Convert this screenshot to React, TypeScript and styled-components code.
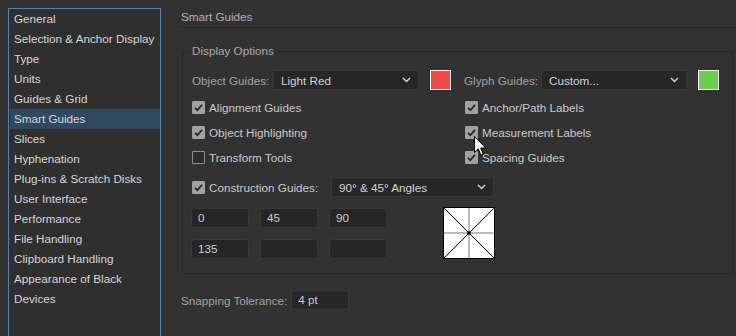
import React from 'react';
import styled, { createGlobalStyle } from 'styled-components';

const GlobalStyle = createGlobalStyle`
  * {
    box-sizing: border-box;
  }

  body {
    margin: 0;
    background: #323232;
    font-family: "Liberation Sans", Arial, sans-serif;
    font-size: 11.7px;
    overflow: hidden;
  }
`;

const Page = styled.div`
  position: relative;
  display: flex;
  align-items: flex-start;
  width: 736px;
  height: 336px;
  overflow: hidden;
`;

const Sidebar = styled.ul`
  list-style: none;
  margin: 8px 0 0 8px;
  padding: 0 0 0 1px;
  width: 153px;
  height: 340px;
  flex-shrink: 0;
  background: #2f2f2f;
  border: 1px solid #5683ae;
`;

const NavItem = styled.li<{ $active?: boolean }>`
  height: 20px;
  line-height: 20px;
  padding-left: 4px;
  color: #d6d6d6;
  white-space: nowrap;
  background: ${(p) => (p.$active ? '#2f4961' : 'transparent')};
`;

const Main = styled.div`
  flex: 1;
  margin-left: 19px;
`;

const Header = styled.div`
  padding: 9px 0 2px 1px;
  line-height: 16px;
  color: #b2b2b2;
  border-bottom: 1px solid #262626;
  box-shadow: 0 1px 0 #363636;
`;

const Group = styled.fieldset`
  margin: 15px 3px 0 2px;
  padding: 11px 9px 14px 9px;
  min-width: 0;
  border: 1px solid #282828;
  border-radius: 2px;
`;

const Legend = styled.legend`
  padding: 0 3px;
  margin-left: -3px;
  line-height: 16px;
  color: #a9a9a9;
`;

const TopRow = styled.div`
  display: grid;
  grid-template-columns: 272px 1fr;
`;

const Field = styled.div`
  display: flex;
  align-items: center;
  height: 20px;
`;

const FieldLabel = styled.span<{ $width?: number }>`
  width: ${(p) => (p.$width ? `${p.$width}px` : 'auto')};
  color: #a2a2a2;
  white-space: nowrap;
`;

const Select = styled.div<{ $width: number }>`
  display: flex;
  align-items: center;
  justify-content: space-between;
  width: ${(p) => p.$width}px;
  height: 20px;
  padding: 0 7px 0 7px;
  background: #272727;
  border: 1px solid #393939;
  border-radius: 3px;
  color: #d2d2d2;
  white-space: nowrap;

  svg {
    flex-shrink: 0;
  }
`;

const Swatch = styled.div<{ $color: string }>`
  width: 21px;
  height: 20px;
  margin-left: 11px;
  background: ${(p) => p.$color};
  border: 1px solid #f2f2f2;
`;

const CheckGrid = styled.div`
  display: grid;
  grid-template-columns: 273px 1fr;
  grid-auto-rows: 25px;
  align-items: center;
  margin-top: 5px;
`;

const CheckRow = styled.label<{ $width?: number }>`
  display: flex;
  align-items: center;
  gap: 4px;
  width: ${(p) => (p.$width ? `${p.$width}px` : 'auto')};
  color: #c9c9c9;
  white-space: nowrap;
`;

const Box = styled.span<{ $checked: boolean }>`
  display: flex;
  align-items: center;
  justify-content: center;
  width: 13px;
  height: 13px;
  border-radius: 1px;
  background: ${(p) => (p.$checked ? '#a1a1a1' : '#2c2c2c')};
  border: 1px solid ${(p) => (p.$checked ? '#a1a1a1' : '#8e8e8e')};
`;

const ConstructionRow = styled.div`
  display: flex;
  align-items: center;
  margin-top: 7px;
`;

const AngleArea = styled.div`
  display: flex;
  align-items: flex-start;
  margin-top: 10px;
  gap: 56px;
`;

const AngleGrid = styled.div`
  display: grid;
  grid-template-columns: repeat(3, 58px);
  grid-auto-rows: 20px;
  gap: 11px;
  margin-left: -1px;
  margin-top: 1px;
`;

const NumBox = styled.div<{ $width?: number }>`
  width: ${(p) => (p.$width ? `${p.$width}px` : 'auto')};
  height: 20px;
  line-height: 18px;
  padding-left: 6px;
  background: #262626;
  border: 1px solid #393939;
  border-radius: 3px;
  color: #cdcdcd;
`;

const SnapRow = styled.div`
  display: flex;
  align-items: center;
  gap: 4px;
  margin-top: 16px;
  padding-left: 1px;
`;

const Cursor = styled.svg`
  position: absolute;
  left: 474px;
  top: 136px;
`;

const Chevron = () => (
  <svg width="9" height="6" viewBox="0 0 9 6">
    <path d="M1 1 L4.5 4.5 L8 1" fill="none" stroke="#cfcfcf" strokeWidth="1.5" />
  </svg>
);

const Check = ({ checked }: { checked: boolean }) => (
  <Box $checked={checked}>
    {checked && (
      <svg width="11" height="11" viewBox="0 0 11 11">
        <path d="M2 5.8 L4.4 8.2 L9 2.8" fill="none" stroke="#2a2a2a" strokeWidth="1.8" />
      </svg>
    )}
  </Box>
);

const AngleDiagram = () => (
  <svg width="52" height="52" viewBox="0 0 52 52">
    <rect x="0.5" y="0.5" width="51" height="51" fill="#fff" stroke="#000" />
    <line x1="26" y1="1" x2="26" y2="51" stroke="#b9b9b9" strokeWidth="2" />
    <line x1="1" y1="26" x2="51" y2="26" stroke="#b9b9b9" strokeWidth="2" />
    <line x1="1" y1="1" x2="51" y2="51" stroke="#000" strokeWidth="1" />
    <line x1="51" y1="1" x2="1" y2="51" stroke="#000" strokeWidth="1" />
    <circle cx="26" cy="26" r="1.8" fill="#000" />
  </svg>
);

const navItems = [
  'General',
  'Selection & Anchor Display',
  'Type',
  'Units',
  'Guides & Grid',
  'Smart Guides',
  'Slices',
  'Hyphenation',
  'Plug-ins & Scratch Disks',
  'User Interface',
  'Performance',
  'File Handling',
  'Clipboard Handling',
  'Appearance of Black',
  'Devices',
];

const checks: Array<[string, boolean]> = [
  ['Alignment Guides', true],
  ['Anchor/Path Labels', true],
  ['Object Highlighting', true],
  ['Measurement Labels', true],
  ['Transform Tools', false],
  ['Spacing Guides', true],
];

const angles = ['0', '45', '90', '135', '', ''];

const App = () => {
  return (
    <Page>
      <GlobalStyle />

      <Sidebar>
        {navItems.map((item) => (
          <NavItem key={item} $active={item === 'Smart Guides'}>{item}</NavItem>
        ))}
      </Sidebar>

      <Main>
        <Header>Smart Guides</Header>

        <Group>
          <Legend>Display Options</Legend>

          <TopRow>
            <Field>
              <FieldLabel $width={81}>Object Guides:</FieldLabel>
              <Select $width={146}>Light Red<Chevron /></Select>
              <Swatch $color="#f34848" />
            </Field>
            <Field>
              <FieldLabel $width={77}>Glyph Guides:</FieldLabel>
              <Select $width={146}>Custom...<Chevron /></Select>
              <Swatch $color="#6dcd4f" />
            </Field>
          </TopRow>

          <CheckGrid>
            {checks.map(([label, checked]) => (
              <CheckRow key={label}>
                <Check checked={checked} />
                {label}
              </CheckRow>
            ))}
          </CheckGrid>

          <ConstructionRow>
            <CheckRow $width={139}>
              <Check checked />
              Construction Guides:
            </CheckRow>
            <Select $width={163}>90° &amp; 45° Angles<Chevron /></Select>
          </ConstructionRow>

          <AngleArea>
            <AngleGrid>
              {angles.map((a, i) => (
                <NumBox key={i}>{a}</NumBox>
              ))}
            </AngleGrid>
            <AngleDiagram />
          </AngleArea>
        </Group>

        <SnapRow>
          <FieldLabel>Snapping Tolerance:</FieldLabel>
          <NumBox $width={58}>4 pt</NumBox>
        </SnapRow>
      </Main>

      <Cursor width="13" height="21" viewBox="0 0 13 21">
        <path d="M0.5 0.5 L0.5 16.5 L4.3 12.8 L7 19.3 L9.3 18.3 L6.7 12 L11.8 12 Z" fill="#fff" stroke="#000" strokeWidth="1" />
      </Cursor>
    </Page>
  );
};

export default App;
